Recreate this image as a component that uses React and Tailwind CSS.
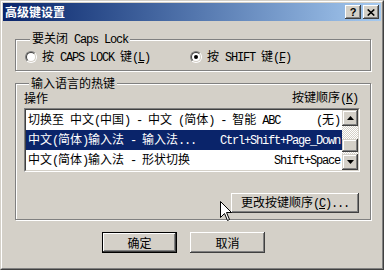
import React from "react";

const CJK = "font-['Noto_Sans_CJK_SC',sans-serif] text-[12px]";
const LAT = "font-['Liberation_Mono',monospace] text-[12px] tracking-[-1.2px]";

function T({ s }) {
  const parts = [];
  let key = 0;
  let buf = "";
  let bufAscii = null;
  const flush = () => {
    if (buf) {
      parts.push(
        <span key={key++} className={bufAscii ? LAT : CJK}>
          {buf}
        </span>
      );
      buf = "";
    }
  };
  let i = 0;
  while (i < s.length) {
    const ch = s[i];
    if (ch === "&") {
      flush();
      parts.push(
        <span key={key++} className={LAT + " underline underline-offset-1"}>
          {s[i + 1]}
        </span>
      );
      i += 2;
      bufAscii = null;
      continue;
    }
    const a = ch.charCodeAt(0) < 128;
    if (bufAscii !== null && a !== bufAscii) flush();
    bufAscii = a;
    buf += ch;
    i++;
  }
  flush();
  return <span className="whitespace-pre leading-[12px]">{parts}</span>;
}

const raised =
  "bg-[#d4d0c8] shadow-[inset_-1px_-1px_#404040,inset_1px_1px_#ffffff,inset_-2px_-2px_#808080,inset_2px_2px_#d4d0c8]";
const raisedSb =
  "bg-[#d4d0c8] shadow-[inset_-1px_-1px_#404040,inset_1px_1px_#d4d0c8,inset_-2px_-2px_#808080,inset_2px_2px_#ffffff]";

function Radio({ checked }) {
  return (
    <div className="w-[12px] h-[12px] shrink-0 rounded-full border border-t-[#808080] border-l-[#808080] border-r-white border-b-white">
      <div className="w-full h-full rounded-full border border-t-[#404040] border-l-[#404040] border-r-[#d4d0c8] border-b-[#d4d0c8] bg-white flex items-center justify-center">
        {checked && <div className="w-[4px] h-[4px] rounded-full bg-black" />}
      </div>
    </div>
  );
}

function Row({ left, right, selected }) {
  return (
    <div
      className={
        "h-[20px] flex items-center justify-between pl-[2px] pr-[2px] whitespace-nowrap " +
        (selected ? "bg-[#0a246a] text-white" : "text-black")
      }
    >
      <T s={left} />
      <T s={right} />
    </div>
  );
}

function Arrow({ up }) {
  return (
    <svg width="7" height="4" viewBox="0 0 7 4">
      {up ? (
        <polygon points="3.5,0 7,4 0,4" fill="#000" />
      ) : (
        <polygon points="0,0 7,0 3.5,4" fill="#000" />
      )}
    </svg>
  );
}

export default function App() {
  return (
    <div className="relative w-[384px] h-[270px] bg-[#d4d0c8] border border-t-[#d4d0c8] border-l-[#d4d0c8] border-r-[#404040] border-b-[#404040] text-black select-none overflow-hidden font-['Noto_Sans_CJK_SC',sans-serif] text-[12px] leading-[12px]">
      <div className="h-full border border-t-white border-l-white border-r-[#808080] border-b-[#808080] p-px flex flex-col">
        {/* Title bar */}
        <div className="h-[18px] shrink-0 flex items-center bg-linear-to-r from-[#0a246a] to-[#a6caf0] pl-[2px] pr-[2px]">
          <span className="flex-1 text-white font-bold text-[12px] leading-[18px] font-['Noto_Sans_CJK_SC',sans-serif]">
            高级键设置
          </span>
          <div className="flex gap-[2px]">
            <div className={"w-[16px] h-[14px] flex items-center justify-center " + raised}>
              <span className="font-['Liberation_Sans',sans-serif] font-bold text-[11px] leading-none text-black">
                ?
              </span>
            </div>
            <div className={"w-[16px] h-[14px] flex items-center justify-center " + raised}>
              <svg width="8" height="7" viewBox="0 0 8 7">
                <path d="M0.7 0.5 L7.3 6.5 M7.3 0.5 L0.7 6.5" stroke="#000" strokeWidth="1.6" />
              </svg>
            </div>
          </div>
        </div>

        {/* Body */}
        <div className="flex-1 flex flex-col">
          <fieldset className="mt-[12px] ml-[12px] w-[356px] border border-[#808080] shadow-[inset_1px_1px_#ffffff,1px_1px_#ffffff] pl-[9px] pt-[6px] pb-[7px]">
            <legend className="ml-[5px] px-[2px] h-[12px] flex items-center bg-[#d4d0c8] whitespace-nowrap">
              <T s="要关闭 Caps Lock" />
            </legend>
            <div className="flex items-center h-[12px]">
              <div className="w-[165px] flex items-center gap-[5px]">
                <Radio />
                <T s="按 CAPS LOCK 键(&L)" />
              </div>
              <div className="flex items-center gap-[5px]">
                <Radio checked />
                <T s="按 SHIFT 键(&F)" />
              </div>
            </div>
          </fieldset>

          <fieldset className="mt-[6px] ml-[12px] w-[356px] border border-[#808080] shadow-[inset_1px_1px_#ffffff,1px_1px_#ffffff] pl-[8px] pr-[10px] pt-[2px] pb-[6px]">
            <legend className="ml-[5px] px-[2px] h-[12px] flex items-center bg-[#d4d0c8] whitespace-nowrap">
              <T s="输入语言的热键" />
            </legend>
            <div className="flex flex-col">
              <div className="h-[14px] flex justify-between items-center pr-[2px] whitespace-nowrap">
                <T s="操作" />
                <T s="按键顺序(&K)" />
              </div>

              {/* List box */}
              <div className="mt-[3px] h-[64px] border border-t-[#808080] border-l-[#808080] border-r-white border-b-white">
                <div className="h-full border border-t-[#404040] border-l-[#404040] border-r-[#d4d0c8] border-b-[#d4d0c8] bg-white flex">
                  <div className="flex-1 flex flex-col min-w-0">
                    <Row left="切换至 中文(中国) - 中文 (简体) - 智能 ABC" right="(无)" />
                    <Row left="中文(简体)输入法 - 输入法..." right="Ctrl+Shift+Page_Down" selected />
                    <Row left="中文(简体)输入法 - 形状切换" right="Shift+Space" />
                  </div>
                  <div className="w-[16px] flex flex-col">
                    <div className={"h-[16px] flex items-center justify-center " + raisedSb}>
                      <Arrow up />
                    </div>
                    <div className="flex-1 flex flex-col bg-[image:repeating-conic-gradient(#d4d0c8_0%_25%,#ffffff_0%_50%)] bg-[length:2px_2px]">
                      <div className="h-[13px]" />
                      <div className={"h-[13px] " + raisedSb} />
                    </div>
                    <div className={"h-[16px] flex items-center justify-center " + raisedSb}>
                      <Arrow />
                    </div>
                  </div>
                </div>
              </div>

              <div
                className={
                  "mt-[21px] self-end mr-[1px] w-[128px] h-[20px] flex items-center justify-center whitespace-nowrap " +
                  raised
                }
              >
                <T s="更改按键顺序(&C)..." />
              </div>
            </div>
          </fieldset>

          <div className="mt-[12px] flex pl-[99px] gap-[13px]">
            <div className="w-[75px] h-[21px] border border-black">
              <div className={"w-full h-full flex items-center justify-center " + raised}>
                <T s="确定" />
              </div>
            </div>
            <div className={"w-[75px] h-[21px] flex items-center justify-center " + raised}>
              <T s="取消" />
            </div>
          </div>
        </div>
      </div>

      {/* Mouse cursor */}
      <svg
        className="absolute left-[219px] top-[200px]"
        width="13"
        height="21"
        viewBox="0 0 13 21"
      >
        <polygon
          points="0.5,0.5 0.5,16.5 4.5,12.5 7.5,19.5 9.5,18.5 6.5,11.5 11.5,11.5"
          fill="#ffffff"
          stroke="#000000"
          strokeWidth="1"
          strokeLinejoin="miter"
        />
      </svg>
    </div>
  );
}
